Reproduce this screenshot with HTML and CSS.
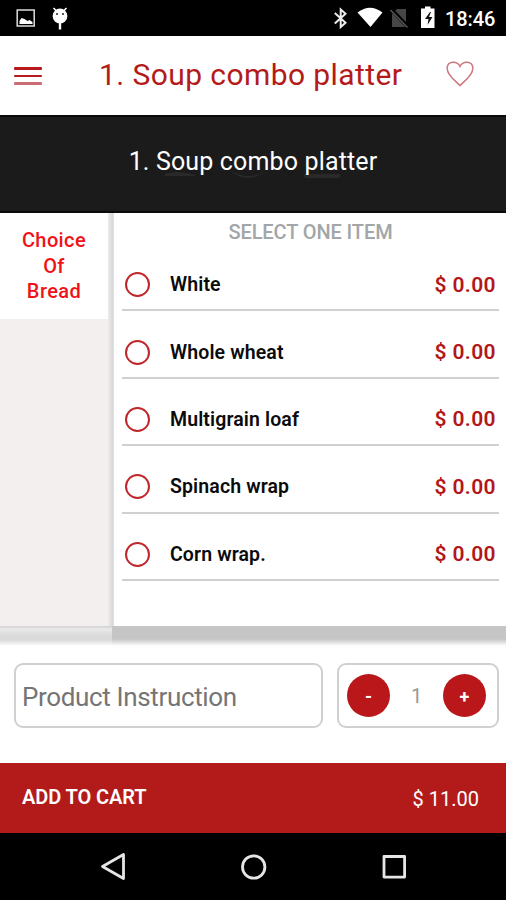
FILE: index.html
```html
<!DOCTYPE html>
<html lang="en">
<head>
<meta charset="utf-8">
<title>Soup combo platter</title>
<link rel="stylesheet" href="styles.css">
</head>
<body>
<div class="status">
  <svg class="notices" viewBox="0 0 80 36">
    <rect x="17.2" y="10" width="17" height="16" fill="none" stroke="#ddd" stroke-width="1.5"/>
    <path d="M19.5 24v-3l2-3 3 1 3 2 2-1 3 2v2z" fill="#fff"/>
    <circle cx="60" cy="16" r="7.4" fill="#fff"/>
    <path d="M53.5 8l3 3M66.500 8l-3 3" stroke="#fff" stroke-width="1.6"/>
    <path d="M60 22v7.500" stroke="#fff" stroke-width="2.4"/>
    <path d="M56 14h2M62 14h2" stroke="#222" stroke-width="1.400"/>
  </svg>
  <svg class="signals" viewBox="0 0 110 36">
    <path d="M2.800 13l10.700 9.800-4.800 4.200V9.500l4.800 4.200-10.700 9.800" fill="none" stroke="#eee" stroke-width="2"/>
    <path d="M25.500 12.500Q38 3 50.500 12.500L38.500 27z" fill="#fff"/>
    <path d="M60 27V14l5-5h9v18z" fill="#464646"/>
    <path d="M59 9l17 18" stroke="#000" stroke-width="4"/>
    <path d="M58.500 10l17 17.500" stroke="#555" stroke-width="1.500"/>
    <path d="M89 8.500h4V6.500h5.500v2h4v19.500H89z" fill="#fff"/>
    <path d="M98 12l-5 7h3.500l-1 6 5-8H97l2-5z" fill="#111"/>
  </svg>
  <span class="clock">18:46</span>
</div>
<header class="topbar">
  <div class="burger"><i></i><i></i><i></i></div>
  <h1>1. Soup combo platter</h1>
  <svg class="heart" viewBox="0 0 28 26"><path d="M14 24.500C11 21 1.200 15 1.200 7.500C1.200-.2 11-.5 14 5.500C17-.5 26.800-.2 26.800 7.500C26.800 15 17 21 14 24.500z"/></svg>
</header>
<div class="banner">
  <svg class="texture" viewBox="0 0 180 20"><path d="M2 8q14-5 32 2H2zM66 4q22 12 36 0-15 16-36 0zM140 8h38l-2 4h-34z"/></svg>
  <h2>1. Soup combo platter</h2>
</div>
<main class="choices">
  <nav><div class="tab">Choice<br>Of<br>Bread</div></nav>
  <section>
    <h3>SELECT ONE ITEM</h3>
    <div class="row"><i class="radio"></i><span class="name">White</span><span class="price">$ 0.00</span></div>
    <div class="row"><i class="radio"></i><span class="name">Whole wheat</span><span class="price">$ 0.00</span></div>
    <div class="row"><i class="radio"></i><span class="name">Multigrain loaf</span><span class="price">$ 0.00</span></div>
    <div class="row"><i class="radio"></i><span class="name">Spinach wrap</span><span class="price">$ 0.00</span></div>
    <div class="row"><i class="radio"></i><span class="name">Corn wrap.</span><span class="price">$ 0.00</span></div>
  </section>
</main>
<div class="shade"><div class="shade-left"></div><div class="shade-right"></div></div>
<div class="order">
  <div class="instruction">Product Instruction</div>
  <div class="stepper"><b class="btn">-</b><span>1</span><b class="btn">+</b></div>
</div>
<div class="cart"><b>ADD TO CART</b><span>$ 11.00</span></div>
<div class="navbar">
  <svg viewBox="0 0 506 67"><g fill="none" stroke="#e6e6e6" stroke-width="2.800" stroke-linejoin="round"><path d="M102.500 33.500L123.500 21.500V45.500z"/><circle cx="253.700" cy="34" r="11.200"/><rect x="384" y="23.500" width="20.600" height="20.600"/></g></svg>
</div>
</body>
</html>
```

FILE: styles.css
```css
* { box-sizing: border-box; }
body {
  margin: 0; width: 506px; height: 900px; overflow: hidden;
  background: #fff; font-family: Roboto, "Liberation Sans", sans-serif;
  display: flex; flex-direction: column;
}
h1, h2, h3 { margin: 0; font-weight: 400; white-space: nowrap; }
.status { height: 36px; background: #000; display: flex; color: #fff; flex: none; }
.notices { width: 80px; height: 36px; margin-right: 252px; }
.signals { width: 110px; height: 36px; }
.clock { font-size: 20px; line-height: 38px; font-weight: 500; margin-left: 3px; letter-spacing: -.1px; }
.topbar { height: 79px; flex: none; display: flex; align-items: center; color: #b31b1b; }
.burger { width: 28px; margin: 1px 0 0 14px; display: flex; flex-direction: column; gap: 5px; }
.burger i { height: 2.5px; border-radius: 1px; background: #b8191c; }
.burger i:last-child { background: #cb6d75; }
.topbar h1 { width: 304px; margin-left: 57px; padding-bottom: 2px; font-size: 30px; line-height: 76px; letter-spacing: .42px; }
.heart { width: 28px; height: 26px; margin: 0 0 3px 43px; }
.heart path { fill: none; stroke: #d07880; stroke-width: 1.5; }
.banner { height: 98px; flex: none; background: #1b1b1b; border-top: 2px solid #0b0b0b; border-bottom: 2px solid #0b0b0b; display: grid; justify-items: center; }
.banner h2 { grid-area: 1 / 1; color: #fff; font-size: 25px; line-height: 89px; letter-spacing: .15px; z-index: 1; }
.texture { grid-area: 1 / 1; width: 180px; height: 20px; margin-top: 49px; fill: #292929; }
.choices { height: 413px; flex: none; display: flex; }
nav { width: 114px; background: linear-gradient(90deg, #f2efee 108px, #e6e6e6 109px, #d8d8d8 113px, #e8e8e8 114px); }
.tab { width: 108px; height: 106px; padding-top: 15px; background: #fff; color: #f01218; font-weight: 500; font-size: 20px; line-height: 25.5px; text-align: center; letter-spacing: .4px; }
section { flex: 1; padding: 0 7px 0 8px; }
h3 { height: 31px; line-height: 38px; text-align: center; font-size: 20px; font-weight: 500; color: #a2a6a8; letter-spacing: -.1px; }
.row { height: 67.4px; border-bottom: 2px solid #d0d0d0; display: flex; align-items: center; padding: 16px 3px 0; }
.radio { width: 25px; height: 25px; border: 2px solid #c0272b; border-radius: 50%; margin-right: 20px; }
.name { flex: 1; font-size: 19.5px; font-weight: 600; color: #0b0b0b; letter-spacing: .12px; }
.price { color: #b31719; font-size: 21px; font-weight: 600; letter-spacing: .4px; }
.shade { height: 22px; flex: none; display: flex; }
.shade-left { width: 112px; background: linear-gradient(#d0d0d0 0, #e9e9e9 3px, #dadada 10px, #dadada 14px, #fff 20px); }
.shade-right { flex: 1; background: linear-gradient(#c5c5c5 0, #c5c5c5 13px, #fff 20px); }
.order { height: 115px; flex: none; display: flex; gap: 14px; padding: 15px 7px 0 14px; }
.instruction, .stepper { height: 65px; border: 2px solid #d0d0d0; border-radius: 9px; }
.instruction { width: 309px; padding-left: 6px; line-height: 64px; font-size: 26px; color: #757575; white-space: nowrap; letter-spacing: -.35px; }
.stepper { flex: 1; display: flex; align-items: center; justify-content: space-between; padding: 0 11px 0 8px; color: #999; font-size: 20px; }
.btn { width: 43px; height: 43px; border-radius: 50%; background: #b91719; color: #fff; text-align: center; line-height: 45px; font-size: 18px; }
.cart { height: 70px; flex: none; background: #b31b1b; color: #fff; display: flex; justify-content: space-between; padding: 0 27px 0 22px; font-size: 20px; line-height: 68px; }
.cart b { font-weight: 600; letter-spacing: -.1px; }
.cart span { line-height: 72px; }
.navbar { height: 67px; flex: none; background: #000; }
.navbar svg { display: block; width: 506px; height: 67px; }
```
